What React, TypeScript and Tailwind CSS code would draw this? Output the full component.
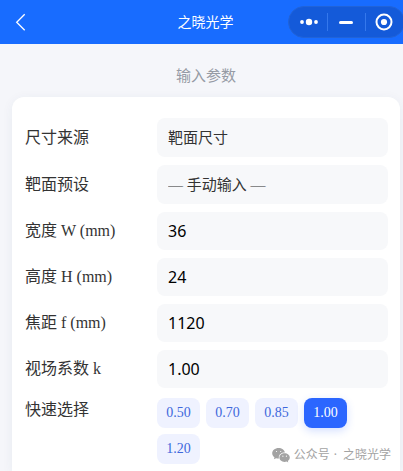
import { useState } from "react";

const serif = "font-['Liberation_Serif','Noto_Sans_CJK_SC',serif]";
const sans = "font-['Noto_Sans','Noto_Sans_CJK_SC',sans-serif]";

const numberFields = [
  { id: "width", label: "宽度 W (mm)", value: "36" },
  { id: "height", label: "高度 H (mm)", value: "24" },
  { id: "focal", label: "焦距 f (mm)", value: "1120" },
  { id: "factor", label: "视场系数 k", value: "1.00" },
];

const factors = ["0.50", "0.70", "0.85", "1.00", "1.20"];

function Header() {
  return (
    <header className="grid h-11 shrink-0 grid-cols-[1fr_auto_1fr] items-center bg-[#186cff] text-white">
      <button aria-label="返回" className="ml-3 flex h-8 w-8 items-center">
        <svg width="16" height="18" viewBox="0 0 16 18" fill="none" stroke="currentColor" strokeWidth="1.3">
          <path d="M12.700 1.300 4.700 9.300l8 8" />
        </svg>
      </button>
      <h1 className={`${sans} pl-2 text-sm leading-5`}>之晓光学</h1>
      <div className="-mr-0.5 flex h-8 w-[117px] items-center justify-self-end rounded-full border border-[#2163d8] bg-[#145ad9]">
        <button aria-label="更多" className="flex h-full flex-1 items-center justify-center pl-0.5">
          <svg width="20" height="8" viewBox="0 0 20 8" fill="currentColor">
            <circle cx="3" cy="4" r="1.9" />
            <circle cx="10" cy="4" r="3.200" />
            <circle cx="17" cy="4" r="1.9" />
          </svg>
        </button>
        <span className="h-[18px] w-px bg-[#3578ec]" />
        <button aria-label="最小化" className="flex h-full flex-1 items-center justify-center">
          <span className="h-[3px] w-3.5 rounded-full bg-white" />
        </button>
        <span className="h-[18px] w-px bg-[#3578ec]" />
        <button aria-label="关闭" className="flex h-full flex-1 items-center justify-center pr-0.5">
          <svg width="18" height="18" viewBox="0 0 18 18">
            <circle cx="9" cy="9" r="7.500" fill="none" stroke="currentColor" strokeWidth="2" />
            <circle cx="9" cy="9" r="3.100" fill="currentColor" />
          </svg>
        </button>
      </div>
    </header>
  );
}

function SelectRow({ id, label, option }: { id: string; label: string; option: string }) {
  return (
    <div className="grid grid-cols-[132px_1fr] items-center">
      <label htmlFor={id}>{label}</label>
      <select
        id={id}
        className="h-[39px] w-full appearance-none rounded-lg bg-[#f7f8fa] px-[11px] text-[15px] text-[#333]"
      >
        <option>{option}</option>
      </select>
    </div>
  );
}

function WeChatIcon() {
  return (
    <svg width="18" height="15" viewBox="0 0 18 15" fill="#a3a3a3">
      <path
        fillRule="evenodd"
        d="M6.600 0C3 0 .2 2.400.2 5.300c0 1.700.9 3.100 2.300 4.100l-.6 1.900 2.200-1.100c.8.2 1.600.4 2.500.400h.4a4.600 4.600 0 0 1-.2-1.200c0-2.800 2.700-4.900 5.900-4.900h.2C12.400 1.900 9.800 0 6.600 0ZM4.500 2.900a.6.6 0 1 1 0 1.200.6.6 0 0 1 0-1.200Zm4.200 0a.6.6 0 1 1 0 1.200.6.6 0 0 1 0-1.200Z"
      />
      <path
        fillRule="evenodd"
        d="M12.600 5.300c-3 0-5.200 1.900-5.200 4.300s2.200 4.300 5.200 4.300c.7 0 1.300-.1 1.900-.3l1.800.9-.5-1.500c1.200-.8 2-2 2-3.400 0-2.400-2.300-4.300-5.200-4.300Zm-1.700 2.300a.6.6 0 1 1 0 1.200.6.6 0 0 1 0-1.200Zm3.500 0a.6.6 0 1 1 0 1.200.6.6 0 0 1 0-1.200Z"
      />
    </svg>
  );
}

export default function App() {
  const [factor, setFactor] = useState("1.00");

  return (
    <div className={`${serif} relative flex h-screen flex-col overflow-hidden bg-[#f5f6fa] text-base leading-6 text-[#333]`}>
      <Header />
      <main className="flex flex-1 flex-col pl-3 pr-[3px] pt-5">
        <h2 className="text-center text-[15px] text-[#969ba5]">输入参数</h2>
        <form className="mt-[9px] flex flex-1 flex-col gap-2 rounded-t-xl bg-white pl-[13px] pr-3 pt-[21px] shadow-[0_2px_12px_rgba(40,60,110,0.06)]">
          <SelectRow id="source" label="尺寸来源" option="靶面尺寸" />
          <SelectRow id="preset" label="靶面预设" option="— 手动输入 —" />
          {numberFields.map((field) => (
            <div key={field.id} className="grid grid-cols-[132px_1fr] items-center">
              <label htmlFor={field.id}>{field.label}</label>
              <input
                id={field.id}
                defaultValue={field.value}
                inputMode="decimal"
                className={`${sans} h-[38px] w-full min-w-0 rounded-lg bg-[#f7f8fa] px-[11px] text-base text-black`}
              />
            </div>
          ))}
          <div className="grid grid-cols-[132px_1fr] items-start pt-0.5">
            <span>快速选择</span>
            <div className="flex flex-wrap gap-1.5">
              {factors.map((value) => (
                <button
                  key={value}
                  type="button"
                  aria-pressed={value === factor}
                  onClick={() => setFactor(value)}
                  className={`h-[30px] w-[43px] rounded-lg text-sm ${
                    value === factor
                      ? "bg-[#2b66ff] text-white shadow-[0_3px_8px_rgba(43,102,255,0.2)]"
                      : "bg-[#eff2ff] text-[#3e68dc]"
                  }`}
                >
                  {value}
                </button>
              ))}
            </div>
          </div>
        </form>
      </main>
      <div className={`${sans} absolute bottom-1.5 right-3 flex items-center gap-1 text-xs leading-5 text-[#a3a3a3]`}>
        <WeChatIcon />
        <span>公众号</span>
        <span>·</span>
        <span className="pl-0.5">之晓光学</span>
      </div>
    </div>
  );
}
